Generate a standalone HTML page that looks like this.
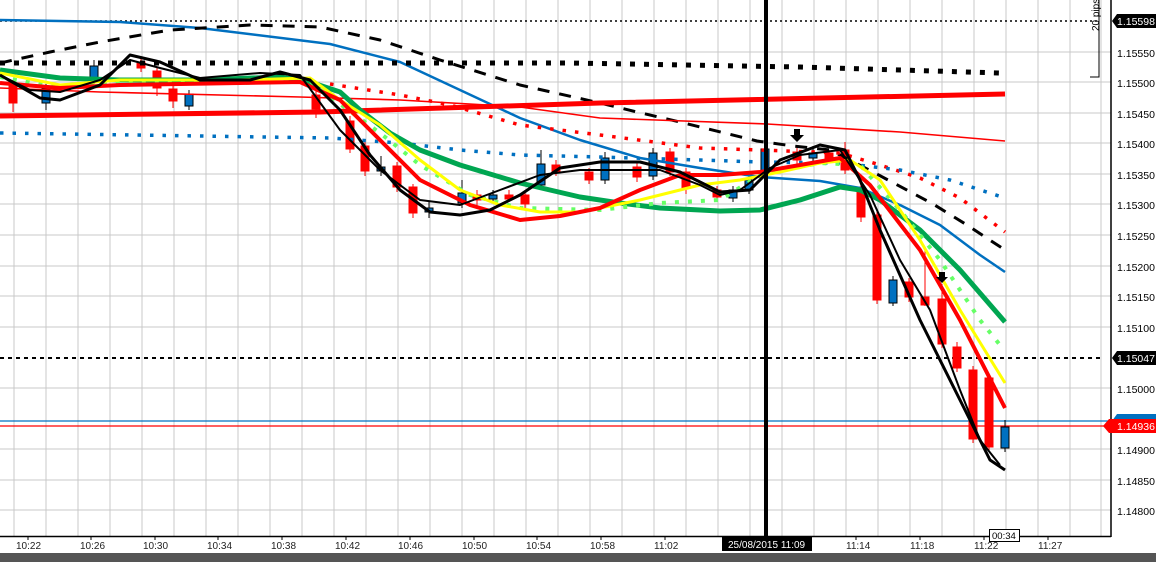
<!DOCTYPE html>
<html><head><meta charset="utf-8"><style>
html,body{margin:0;padding:0;background:#fff;width:1156px;height:562px;overflow:hidden}
svg{display:block;font-family:"Liberation Sans",sans-serif}
</style></head><body>
<svg width="1156" height="562" viewBox="0 0 1156 562" xmlns="http://www.w3.org/2000/svg">
<rect width="1156" height="562" fill="#fff"/>
<g stroke="#c8c8c8" stroke-width="1">
<path d="M14 0V536M46 0V536M78 0V536M110 0V536M142 0V536M174 0V536M206 0V536M238 0V536M270 0V536M302 0V536M334 0V536M366 0V536M398 0V536M430 0V536M462 0V536M494 0V536M526 0V536M558 0V536M590 0V536M622 0V536M654 0V536M686 0V536M718 0V536M750 0V536M782 0V536M814 0V536M846 0V536M878 0V536M910 0V536M942 0V536M974 0V536M1006 0V536M1038 0V536M1070 0V536M1101 0V536"/>
<path d="M0 52H1111M0 82H1111M0 113H1111M0 143H1111M0 174H1111M0 204H1111M0 235H1111M0 266H1111M0 296H1111M0 327H1111M0 388H1111M0 449H1111M0 480H1111M0 510H1111"/>
</g>
<path d="M0 21H1100" stroke="#000" stroke-width="1.5" stroke-dasharray="2,3"/>
<path d="M0 358H1100" stroke="#000" stroke-width="2" stroke-dasharray="4,4"/>
<path d="M0 421H1111" stroke="#0070c0" stroke-width="1.2"/>
<path d="M0 426H1111" stroke="#f00" stroke-width="1.2"/>
<!-- wicks -->
<g stroke-width="1">
<path stroke="#f00" d="M13 80V112M141 58V72M157 68V96M173 86V108M316 90V118M350 116V153M365 142V176M397 162V192M413 184V218M477 190V206M509 190V202M525 190V208M556 160V176M589 168V184M637 162V182M670 148V176M686 168V194M717 186V202M797 146V164M829 150V162M845 142V174M861 182V222M877 210V304M909 278V302M925 248V306M942 284V348M957 342V372M973 366V443M989 374V450"/>
<path stroke="#000" d="M46 84V110M94 60V84M189 90V110M381 156V176M429 202V218M462 180V208M493 190V202M541 150V190M605 152V184M653 148V180M733 186V202M749 176V194M765 144V176M813 146V164M893 276V306M1005 420V452"/>
</g>
<g stroke-width="1">
<g fill="#f00" stroke="#f00">
<rect x="9" y="85" width="8" height="18"/><rect x="137" y="62" width="8" height="6"/><rect x="153" y="71" width="8" height="17"/><rect x="169" y="89" width="8" height="12"/>
<rect x="312" y="95" width="8" height="14"/><rect x="346" y="121" width="8" height="28"/><rect x="361" y="146" width="8" height="25"/><rect x="393" y="166" width="8" height="21"/><rect x="409" y="187" width="8" height="26"/>
<rect x="473" y="195" width="8" height="5"/><rect x="505" y="195" width="8" height="4"/><rect x="521" y="195" width="8" height="9"/><rect x="552" y="165" width="8" height="7"/>
<rect x="585" y="172" width="8" height="8"/><rect x="633" y="167" width="8" height="10"/><rect x="666" y="152" width="8" height="20"/><rect x="682" y="172" width="8" height="16"/><rect x="713" y="190" width="8" height="7"/>
<rect x="793" y="152" width="8" height="8"/><rect x="825" y="153" width="8" height="6"/><rect x="841" y="150" width="8" height="20"/><rect x="857" y="187" width="8" height="30"/><rect x="873" y="215" width="8" height="85"/>
<rect x="905" y="282" width="8" height="15"/><rect x="921" y="297" width="8" height="8"/><rect x="938" y="299" width="8" height="45"/><rect x="953" y="347" width="8" height="21"/><rect x="969" y="370" width="8" height="69"/><rect x="985" y="378" width="8" height="69"/>
</g>
<g fill="#0070c0" stroke="#000">
<rect x="42" y="89" width="8" height="14"/><rect x="90" y="66" width="8" height="14"/><rect x="185" y="94" width="8" height="12"/><rect x="377" y="167" width="8" height="4"/><rect x="425" y="208" width="8" height="4"/>
<rect x="458" y="193" width="8" height="10"/><rect x="489" y="195" width="8" height="4"/><rect x="537" y="164" width="8" height="21"/><rect x="601" y="158" width="8" height="22"/><rect x="649" y="153" width="8" height="23"/>
<rect x="729" y="190" width="8" height="8"/><rect x="745" y="180" width="8" height="10"/><rect x="761" y="149" width="8" height="23"/><rect x="809" y="153" width="8" height="5"/><rect x="889" y="280" width="8" height="23"/><rect x="1001" y="427" width="8" height="21"/>
</g>
</g>
<g fill="none" stroke-linejoin="round" stroke-linecap="butt">
<polyline stroke="#0070c0" stroke-width="2.5" points="0,20 120,22 200,28 330,44 400,62 460,90 520,118 580,140 640,158 700,168 760,177 820,181 860,188 900,205 940,225 980,255 1005,272"/>
<polyline stroke="#000" stroke-width="3" stroke-dasharray="12,10" points="0,63 50,52 100,42 170,30 250,25 320,27 380,40 440,60 520,85 600,103 637,112 680,122 757,141 793,146 830,150 873,172 933,204 967,225 1005,250"/>
<polyline stroke="#000" stroke-width="5" stroke-dasharray="5,9" points="0,63 570,63 800,67 1000,73"/>
<polyline stroke="#f00" stroke-width="5" points="0,116 320,112 600,103 1005,94"/>
<polyline stroke="#f00" stroke-width="1.6" points="0,88 100,92 300,97 400,100 520,107 600,118 767,124 900,132 1005,141"/>
<polyline stroke="#f00" stroke-width="3.5" stroke-dasharray="3.5,9" points="330,84 400,95 450,105 520,125 600,135 700,148 760,150 840,153 880,165 920,178 960,198 1005,232"/>
<polyline stroke="#0070c0" stroke-width="3.5" stroke-dasharray="3.5,9" points="0,133 200,136 330,138 400,143 460,150 520,155 600,157 700,160 760,162 840,163 900,170 950,180 1005,198"/>
<polyline stroke="#00a651" stroke-width="5" points="0,70 60,78 120,80 200,80 280,77 310,82 340,92 360,110 390,133 420,150 460,165 520,183 580,197 620,203 660,208 720,211 760,210 800,200 840,187 860,190 880,200 920,230 960,270 1005,322"/>
<polyline stroke="#66ff66" stroke-width="4" stroke-dasharray="4,9" points="0,77 60,88 120,83 240,83 310,81 340,104 380,133 420,165 470,195 520,208 600,210 660,203 720,200 760,175 820,163 860,165 900,210 940,260 980,320 1000,345"/>
<polyline stroke="#ffff00" stroke-width="3" points="0,73 60,85 120,80 240,80 310,78 340,100 380,125 420,160 460,190 500,205 540,212 580,212 640,200 700,185 740,180 780,172 820,163 850,160 880,180 920,240 960,310 1005,383"/>
<polyline stroke="#f00" stroke-width="4" points="0,83 60,88 120,85 300,82 340,100 380,140 420,180 470,205 520,220 560,216 600,208 640,190 680,175 720,175 760,172 800,165 840,158 870,185 920,250 960,320 1005,408"/>
<polyline stroke="#000" stroke-width="2" points="0,75 30,90 60,92 100,80 130,60 160,68 200,78 260,73 300,75 340,130 380,170 420,200 460,205 500,190 540,175 580,170 620,170 660,170 700,185 720,195 740,190 770,168 800,155 840,150 870,195 900,260 930,310 960,390 980,440 1000,465"/>
<polyline stroke="#000" stroke-width="3" points="0,75 40,98 60,100 100,85 130,55 160,62 200,80 250,80 280,72 310,80 340,110 370,155 400,190 430,212 460,215 490,210 520,195 560,168 600,162 640,162 680,172 720,192 750,190 780,160 820,145 845,150 860,180 880,230 920,320 960,400 990,460 1005,470"/>
</g>
<path d="M794 129h6v6h4l-7 7-7-7h4z" fill="#000"/>
<path d="M939 272h6v5h3l-6 6-6-6h3z" fill="#000"/>
<rect x="764" y="0" width="4" height="537" fill="#000"/>
<path d="M1111 0V537M0 536.5H1111" stroke="#000" stroke-width="1.5"/>
<path d="M1099 0V77H1090" stroke="#000" stroke-width="1" fill="none"/>
<text transform="translate(1099,31) rotate(-90)" font-size="10" fill="#000">20 pips</text>
<g font-size="10.5" fill="#000">
<text x="1117" y="57">1.15550</text><text x="1117" y="87">1.15500</text><text x="1117" y="118">1.15450</text><text x="1117" y="148">1.15400</text><text x="1117" y="179">1.15350</text><text x="1117" y="209">1.15300</text><text x="1117" y="240">1.15250</text><text x="1117" y="271">1.15200</text><text x="1117" y="301">1.15150</text><text x="1117" y="332">1.15100</text><text x="1117" y="393">1.15000</text><text x="1117" y="454">1.14900</text><text x="1117" y="485">1.14850</text><text x="1117" y="515">1.14800</text>
</g>
<path d="M1112 21l5-7h39v14h-39z" fill="#000"/><text x="1117" y="25" font-size="10.5" fill="#fff">1.15598</text>
<path d="M1112 358l5-7h39v14h-39z" fill="#000"/><text x="1117" y="362" font-size="10.5" fill="#fff">1.15047</text>
<path d="M1112 421l5-7h39v10h-39z" fill="#0070c0"/>
<path d="M1103 426l6-7h47v14h-47z" fill="#f00"/><text x="1117" y="430" font-size="10.5" fill="#fff">1.14936</text>
<g stroke="#000"><path d="M28 536v4M91 536v4M155 536v4M218 536v4M282 536v4M346 536v4M410 536v4M474 536v4M537 536v4M601 536v4M665 536v4M856 536v4M920 536v4M984 536v4M1048 536v4"/></g>
<g font-size="10" fill="#222">
<text x="16" y="549">10:22</text><text x="80" y="549">10:26</text><text x="143" y="549">10:30</text><text x="207" y="549">10:34</text><text x="271" y="549">10:38</text><text x="335" y="549">10:42</text><text x="398" y="549">10:46</text><text x="462" y="549">10:50</text><text x="526" y="549">10:54</text><text x="590" y="549">10:58</text><text x="654" y="549">11:02</text><text x="846" y="549">11:14</text><text x="910" y="549">11:18</text><text x="974" y="549">11:22</text><text x="1038" y="549">11:27</text>
</g>
<rect x="722" y="537" width="90" height="14" fill="#000"/><text x="728" y="548" font-size="10" fill="#fff">25/08/2015 11:09</text>
<rect x="989.5" y="529.5" width="30" height="12" fill="#fff" stroke="#000"/><text x="992" y="539" font-size="9.5" fill="#000">00:34</text>
<rect x="0" y="553" width="1156" height="9" fill="#555"/>
</svg>
</body></html>
